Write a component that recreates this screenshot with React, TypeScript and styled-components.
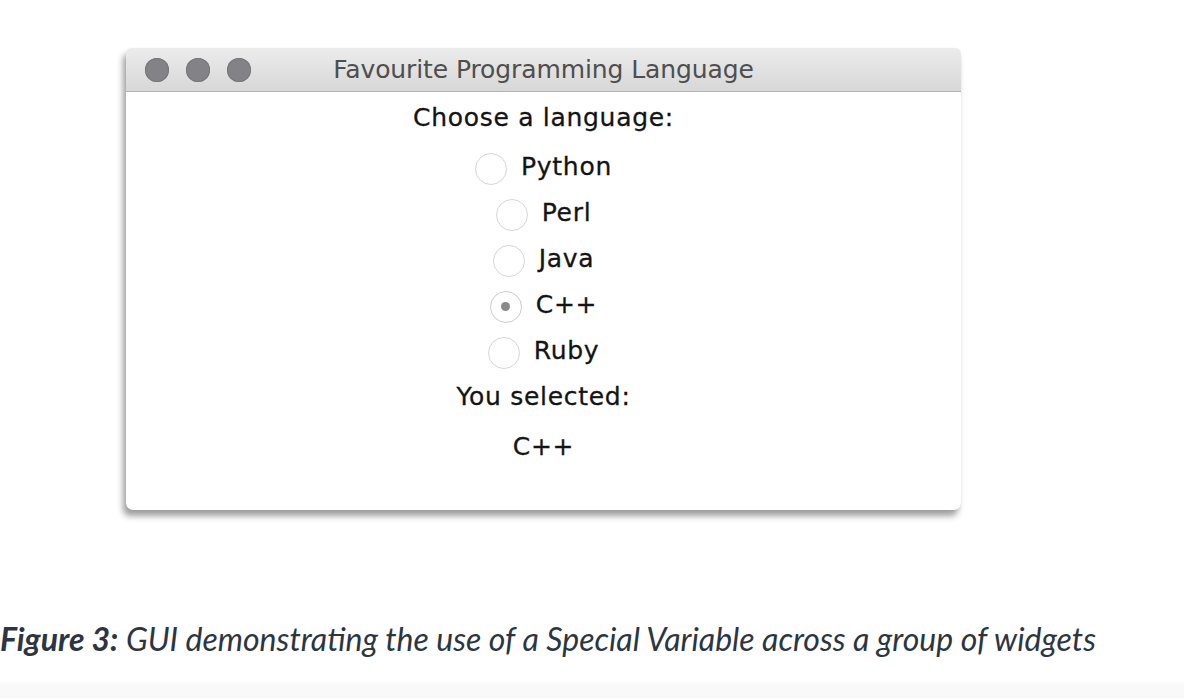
import React, { useState } from 'react';
import styled, { createGlobalStyle } from 'styled-components';

const GlobalStyle = createGlobalStyle`
  html, body {
    margin: 0;
    padding: 0;
    background: #fff;
  }
`;

const Page = styled.div`
  width: 1184px;
  height: 698px;
  overflow: hidden;
  display: flex;
  flex-direction: column;
  background: linear-gradient(to bottom, #fff 0, #fff 680px, #f9f9f9 684px, #f8f8f8 100%);
`;

const Window = styled.div`
  margin: 48px 0 0 126px;
  width: 835px;
  height: 462px;
  display: flex;
  flex-direction: column;
  background: #fff;
  border-radius: 6px 6px 7px 7px;
  box-shadow: -3px 6px 6px rgba(0, 0, 0, 0.38), 0 0 1px rgba(0, 0, 0, 0.15);
  overflow: hidden;
`;

const TitleBar = styled.div`
  height: 43px;
  flex-shrink: 0;
  display: grid;
  grid-template-columns: 1fr auto 1fr;
  align-items: center;
  background: linear-gradient(to bottom, #ececec, #d7d7d7);
  border-bottom: 1px solid #b4b4b4;
  padding: 0 19px;
`;

const Lights = styled.div`
  display: flex;
  gap: 17px;
`;

const Light = styled.span`
  width: 24px;
  height: 24px;
  border-radius: 50%;
  background: #838387;
  box-shadow: inset 0 0 0 1px #76767a;
`;

const Title = styled.div`
  font-family: 'DejaVu Sans', sans-serif;
  font-size: 25px;
  letter-spacing: -0.1px;
  color: #4e4e4e;
  white-space: nowrap;
`;

const Body = styled.div`
  display: flex;
  flex-direction: column;
  align-items: center;
  padding-top: 2px;
  font-family: 'DejaVu Sans', sans-serif;
  font-size: 25px;
  letter-spacing: 0.7px;
  color: #141414;
  -webkit-text-stroke: 0.3px #141414;
`;

const Line = styled.div<{ $h?: number }>`
  height: ${(p) => p.$h ?? 46}px;
  display: flex;
  align-items: center;
  justify-content: center;
`;

const Options = styled.div`
  margin-top: 3px;
  display: flex;
  flex-direction: column;
  align-items: center;
`;

const Row = styled.label`
  height: 46px;
  display: flex;
  align-items: center;
  gap: 14px;
  cursor: pointer;
`;

const Radio = styled.span<{ $on: boolean }>`
  width: 30px;
  height: 30px;
  border-radius: 50%;
  border: 1.5px solid ${(p) => (p.$on ? '#cbcbcb' : '#d6d6d6')};
  background: #fff;
  display: flex;
  align-items: center;
  justify-content: center;
  margin-top: 5px;

  &::after {
    content: '';
    width: 9px;
    height: 9px;
    border-radius: 50%;
    background: ${(p) => (p.$on ? '#8a8a8a' : 'transparent')};
  }
`;

const Caption = styled.p`
  margin: 109px 0 0 0;
  font-family: Lato, 'Open Sans', sans-serif;
  font-style: italic;
  font-size: 32px;
  color: #2c3541;
  white-space: nowrap;

  b {
    font-weight: 700;
  }
`;

const languages = ['Python', 'Perl', 'Java', 'C++', 'Ruby'];

export default function App() {
  const [choice, setChoice] = useState('C++');

  return (
    <Page>
      <GlobalStyle />
      <Window>
        <TitleBar>
          <Lights>
            <Light />
            <Light />
            <Light />
          </Lights>
          <Title>Favourite Programming Language</Title>
          <span />
        </TitleBar>
        <Body>
          <Line>Choose a language:</Line>
          <Options>
            {languages.map((lang) => (
              <Row key={lang} onClick={() => setChoice(lang)}>
                <Radio $on={choice === lang} />
                <span>{lang}</span>
              </Row>
            ))}
          </Options>
          <Line>You selected:</Line>
          <Line $h={54}>{choice}</Line>
        </Body>
      </Window>
      <Caption>
        <b>Figure 3:</b> GUI demonstrating the use of a Special Variable across a group of widgets
      </Caption>
    </Page>
  );
}
